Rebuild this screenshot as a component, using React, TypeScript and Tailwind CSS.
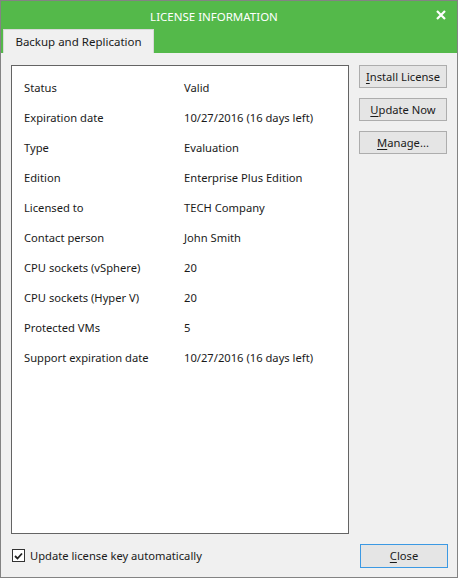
import React from "react";

const rows: [string, string][] = [
  ["Status", "Valid"],
  ["Expiration date", "10/27/2016 (16 days left)"],
  ["Type", "Evaluation"],
  ["Edition", "Enterprise Plus Edition"],
  ["Licensed to", "TECH Company"],
  ["Contact person", "John Smith"],
  ["CPU sockets (vSphere)", "20"],
  ["CPU sockets (Hyper V)", "20"],
  ["Protected VMs", "5"],
  ["Support expiration date", "10/27/2016 (16 days left)"],
];

function Btn({ first, rest, className = "" }: { first: string; rest: string; className?: string }) {
  return (
    <button
      className={`w-[88px] h-[23px] border border-[#adadad] bg-[#e5e5e5] text-[11.2px] text-[#1a1a1a] flex items-center justify-center leading-none ${className}`}
    >
      <span className="underline underline-offset-2">{first}</span>
      <span>{rest}</span>
    </button>
  );
}

export default function App() {
  return (
    <div
      className="w-[458px] h-[578px] border border-[#838383] bg-[#f0f0f0] flex flex-col text-[#1a1a1a]"
      style={{ fontFamily: '"Noto Sans", "Liberation Sans", sans-serif' }}
    >
      <div className="h-[52px] bg-[#54b94a] flex flex-col">
        <div className="h-[28px] flex items-center relative">
          <div className="flex-1 text-center text-white text-[11.5px] pt-[3px] pr-[30px]">LICENSE INFORMATION</div>
          <svg className="absolute right-[11px] top-[9px]" width="10" height="10" viewBox="0 0 10 10">
            <path d="M1 1 L9 9 M9 1 L1 9" stroke="white" strokeWidth="2.2" />
          </svg>
        </div>
        <div className="flex-1 flex items-end pl-[2px]">
          <div className="w-[151px] h-[24px] bg-[#f0f0f0] border-t border-l border-r border-[#d9d9d9] flex items-center justify-center text-[11.5px] pt-[1px]">
            Backup and Replication
          </div>
        </div>
      </div>
      <div className="flex-1 flex flex-col pl-[10px] pt-[12px]">
        <div className="flex">
          <div className="w-[338px] h-[469px] bg-white border border-[#646464] pt-[7px] pl-[12px]">
            {rows.map(([k, v]) => (
              <div key={k} className="h-[30px] flex items-center text-[11.2px]">
                <div className="w-[160px]">{k}</div>
                <div>{v}</div>
              </div>
            ))}
          </div>
          <div className="flex flex-col gap-[9px] ml-[10px]">
            <Btn first="I" rest="nstall License" />
            <Btn first="U" rest="pdate Now" className="mt-[1px]" />
            <Btn first="M" rest="anage..." className="mt-[1px]" />
          </div>
        </div>
        <div className="flex items-center mt-[10px]">
          <div className="flex items-center flex-1 pl-[1px]">
            <div className="w-[13px] h-[13px] border border-[#333] bg-white flex items-center justify-center">
              <svg width="9" height="8" viewBox="0 0 9 8">
                <path d="M1 4 L3.5 6.5 L8 1.5" stroke="#222" strokeWidth="1.8" fill="none" />
              </svg>
            </div>
            <span className="ml-[5px] text-[11.2px]">Update license key automatically</span>
          </div>
          <button className="w-[88px] h-[24px] border border-[#3c99e3] bg-[#e5e5e5] text-[11.2px] flex items-center justify-center mr-[9px]">
            <span className="underline underline-offset-2">C</span>
            <span>lose</span>
          </button>
        </div>
      </div>
    </div>
  );
}
